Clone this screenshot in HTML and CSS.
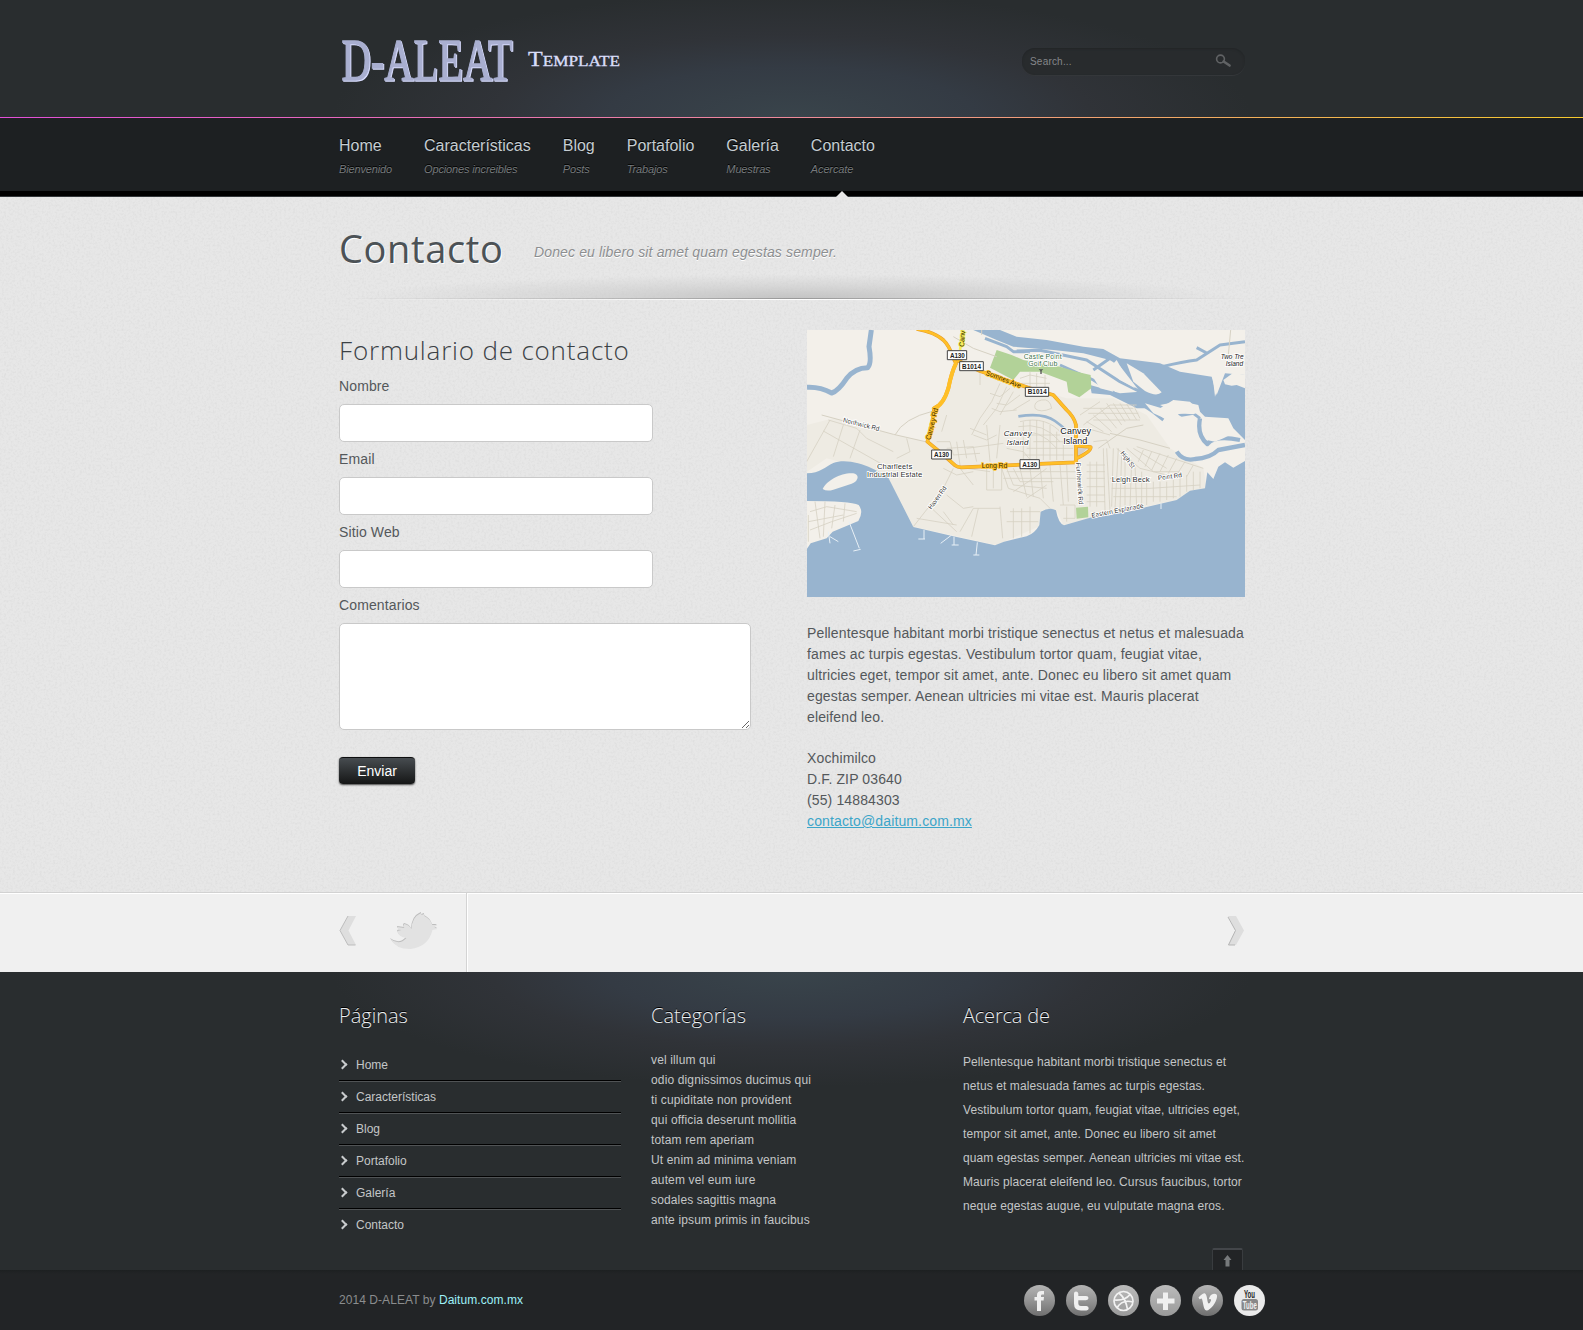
FILE: index.html
```html
<!DOCTYPE html>
<html lang="es">
<head>
<meta charset="utf-8">
<title>D-ALEAT Template - Contacto</title>
<link rel="stylesheet" href="styles.css">
</head>
<body>
<header class="header">
  <div class="wrap header-row">
    <svg class="logo" width="290" height="60" viewBox="0 0 290 60" role="img" aria-label="D-ALEAT Template">
      <text class="logo-name" x="2.500" y="49.500" textLength="171" lengthAdjust="spacingAndGlyphs">D-ALEAT</text>
      <text class="logo-sub" x="189" y="36" textLength="92" lengthAdjust="spacingAndGlyphs">Template</text>
    </svg>
    <form class="search">
      <span class="search-text">Search...</span>
      <svg width="18" height="15" viewBox="0 0 18 15"><circle cx="5.500" cy="5" r="3.900" fill="none" stroke="#606264" stroke-width="1.600"/><path d="M8.600 7.400 14.600 11.600" stroke="#606264" stroke-width="2.500" stroke-linecap="round"/></svg>
    </form>
  </div>
</header>
<div class="rainbow"></div>
<nav class="nav">
  <ul class="wrap nav-list">
    <li>Home<em>Bienvenido</em></li>
    <li>Características<em>Opciones increibles</em></li>
    <li>Blog<em>Posts</em></li>
    <li>Portafolio<em>Trabajos</em></li>
    <li>Galería<em>Muestras</em></li>
    <li class="current">Contacto<em>Acercate</em></li>
  </ul>
</nav>
<main class="main">
  <svg class="grain" width="100%" height="100%"><filter id="paper" x="0" y="0" width="100%" height="100%"><feTurbulence type="fractalNoise" baseFrequency="0.45" numOctaves="2" seed="4"/><feColorMatrix values="0 0 0 0 0.5  0 0 0 0 0.5  0 0 0 0 0.5  0.7 0 0 0 -0.3"/></filter><rect width="100%" height="100%" filter="url(#paper)"/></svg>
  <div class="wrap content">
    <div class="title">
      <h1>Contacto</h1>
      <p>Donec eu libero sit amet quam egestas semper.</p>
    </div>
    <div class="columns">
      <form class="form">
        <h2>Formulario de contacto</h2>
        <label for="n">Nombre</label><input id="n" type="text">
        <label for="e">Email</label><input id="e" type="text">
        <label for="s">Sitio Web</label><input id="s" type="text">
        <label for="c">Comentarios</label><textarea id="c"></textarea>
        <button type="button">Enviar</button>
      </form>
      <div class="info">
        <svg class="map" width="438" height="267" viewBox="21 15 1314 801" preserveAspectRatio="none">
          <rect x="21" y="15" width="1314" height="801" fill="#f3f0ea"/>
          <path fill="#eeebe3" d="M21 300 100 280 290 330 380 350 400 250 440 220 470 110 560 140 690 190 800 220 940 220 1040 270 1110 370 1210 430 1220 490 1130 525 870 580 790 600 770 555 725 555 715 605 590 660 340 605 260 450 80 400 21 440Z"/>
          <!-- southern estuary -->
          <path fill="#98b4cf" d="M21 445C60 445 75 425 100 414C130 402 180 412 215 430L262 452L340 606L460 634L585 661L612 650L680 634Q705 625 718 600L722 560Q750 545 768 556Q775 595 792 601L870 578L1030 548L1130 525L1170 497L1215 490L1222 442L1240 462L1255 425L1275 412L1300 428L1335 408V816H21V671L32 655L80 640L98 620L175 588Q192 560 176 540Q150 528 21 528Z"/>
          <path fill="#f3f0ea" d="M68 492C80 465 130 440 165 446C180 452 172 470 155 476L100 494Q80 500 68 492Z"/>
          <!-- northern creeks -->
          <g fill="none" stroke="#98b4cf" stroke-linejoin="round">
            <path stroke-width="15" d="M214 15 207 65Q216 115 203 128Q165 128 140 160Q115 198 95 204Q60 185 21 187"/>
            <path stroke-width="8" d="M655 274Q730 262 765 288T800 318"/>
            <path stroke-width="9" d="M650 78 720 76 860 105 960 170 1020 200M780 120 880 165 960 215M960 120 930 100 880 135M555 40 620 65 640 80 690 80M1085 125Q1150 110 1190 105L1260 60 1335 50M1190 68 1220 84M1020 235Q1060 260 1090 285M1135 272 1180 265 1200 280"/>
            <path stroke-width="13" d="M1200 280Q1190 330 1222 357Q1245 330 1320 345M1130 380Q1150 410 1185 402Q1230 400 1255 375L1335 360"/>
          </g>
          <path fill="#98b4cf" d="M520 15H600L650 35 740 45 850 65 910 72 960 100 1080 115 1140 140 1235 155 1250 210 1275 145 1335 150V345L1300 310 1285 280 1215 275 1170 230 1120 225 1080 250 1010 250 930 210 875 205 870 180 960 205 1020 200 950 110 850 85 760 75 640 65 590 45Z"/>
          <g fill="#f3f0ea">
            <path d="M980 115 1030 145 1085 202Q1070 216 1035 198L1000 170Z"/>
            <path d="M925 132 950 105 970 140 1005 190 960 165Z"/>
            <path d="M1270 165 1300 143 1335 150V190L1310 180 1295 182 1275 178Z"/>
            <path d="M1080 240 1140 228 1195 240 1200 260 1180 268 1130 265 1110 255Z"/>
            <path d="M1210 285 1260 282 1308 322 1270 340 1245 350 1220 345Z"/>
            <path d="M1035 235 1120 260 1160 285 1120 292 1060 265Z"/>
            <path d="M875 150 930 170 940 200 900 190Z"/>
            <path d="M1238 155 1262 165 1245 215Z"/>
          </g>
          <path fill="#b2d298" d="M590 75 635 90 670 105 780 125 830 140 872 150 874 190 838 217 805 202 800 170 720 140 660 140 640 165 570 128ZM828 548 864 545 865 577 830 581Z"/>
          <!-- residential streets -->
          <g class="streets">
            <path stroke-width="3" d="M65 270 280 328 385 352M285 330Q310 280 400 258M545 15V30M460 35 520 70 590 95M1292 15 1285 90M895 370 980 310 1030 300M930 325 1020 345 1110 370"/>
            <path d="M90 285 20 410M70 318 250 420M130 300 100 395M180 315 150 400M85 285 170 310 200 340 280 380M320 340 330 380 290 400M440 270 425 320M540 140V180M600 175 575 230 540 280 515 330M620 185 590 250 550 300M640 200 600 270M660 160 690 150 740 160M665 175 750 175M690 140V190M710 145V185M735 150V190M630 190 600 215 570 205M660 210 620 240 590 235M690 225 640 255M705 250Q700 230 725 225T755 250Q720 265 705 250M575 250 600 260 650 255"/>
            <path d="M410 350 450 350 460 390 540 385M470 350 480 420M440 370 520 365 530 410M490 345 500 400M520 330 560 345 590 330M560 300 570 410M600 300 590 400M620 370 670 380 700 415M500 370 610 355M510 310 560 330M430 430 470 450 520 440M460 430 430 490 385 550M480 430 520 480M500 430 570 440M560 430V495H605V425M580 430V490M395 550 470 620M440 510 490 550 520 545M520 550 480 620M535 550 515 635M520 550H600M600 545 608 640M430 560 460 600M350 580 470 600M340 605 430 490"/>
            <path d="M660 290Q740 270 790 330M655 305Q730 290 780 350M650 320Q720 310 770 370M670 290V410M690 285V410M710 285V410M730 290V405M750 300V405M770 320V405M790 350V405M660 330H780M700 350H820M680 370H820M670 390H820M850 300 930 240 1010 240M840 270 900 230M860 310 930 330M860 290 910 320M880 270 935 320M900 250 950 310M920 235 965 300M940 235 975 290M960 235 990 285M980 237 1010 285M1000 240 1020 280M850 250H1000M865 265H1015M880 285H1020"/>
            <path d="M605 430 625 490 720 520 750 550M620 430 640 480 740 490M640 430 660 470 760 470M660 430 680 515M690 430 700 515M720 420 730 520M750 420 760 530M780 420 790 540M800 420 805 530M610 460H830M620 440H830M640 500 700 460 740 430M680 520 740 480M630 560H720M620 590H715M640 550V640M665 550V635M690 545V625M780 540H825V580H790M800 545V590M860 420H915M860 440H915M860 460H915M860 485H915M860 510H915M860 530H915M870 410V545M890 410V545M910 370 915 555"/>
            <path d="M920 370 930 560M940 370 935 545M955 370 945 550M965 380 960 550M975 390 975 545M995 410 990 545M1005 420 1010 545M1025 440 1025 540M1040 470 1040 540M1060 470V530M1080 470V530M1100 470V525M1120 465V520M1140 460V515M1160 450V500M1180 440V495M1200 440V490M950 370 1020 430 1100 450M980 370 1060 440 1140 440M1000 370 1100 430M1030 375 1015 410M1055 380 1035 425M1080 385 1055 435M1105 390 1080 440M1130 400 1105 445M1155 410 1130 450M1180 420 1160 455M1010 365 1210 430M930 460H1020M935 490H1050L1200 480M940 515H1130M880 350 920 345 930 370"/>
            <path d="M30 560 80 545 170 560M25 590 130 570M30 615 95 590 170 565M45 530 60 640M75 530 70 635M105 540 95 610M135 535 130 590M25 570V650"/>
          </g>
          <path fill="none" stroke="#e8f0f6" stroke-width="3" d="M147 590 178 670M160 678 182 673M85 620 90 655M90 635 115 650M372 615V642M355 642H375M455 630 422 655M462 635V660M455 660H476M532 652 528 690M520 690H538M1083 535V552"/>
          <!-- main roads -->
          <g fill="none" stroke-linejoin="round">
            <path fill="#d2cfca" d="M828 362H872L830 400Z"/>
            <path stroke="#e39a2d" stroke-width="11" d="M350 12Q400 20 430 45Q448 62 458 95L468 115Q455 140 445 190Q430 240 402 250Q400 290 382 350L425 385L465 421Q472 427 485 427L825 412L830 400Q875 378 872 366L828 362V300Q822 275 800 255L760 210L690 190L540 138L470 105M828 362V412"/>
            <path stroke="#ffbf27" stroke-width="8" d="M350 12Q400 20 430 45Q448 62 458 95L468 115Q455 140 445 190Q430 240 402 250Q400 290 382 350L425 385L465 421Q472 427 485 427L825 412L830 400Q875 378 872 366L828 362V300Q822 275 800 255L760 210L690 190L540 138L470 105M828 362V412"/>
            <path stroke="#ffbf27" stroke-width="12" d="M468 115Q455 140 445 190Q430 240 402 250"/>
            <path stroke="#f6ee59" stroke-width="8" d="M490 15 480 75"/>
          </g>
          <g class="badges"><path d="M442 77h58v27h-58zM479 110h71v27h-71zM676 187h70v27h-70zM395 375h59v27h-59zM660 404h58v27h-58z"/>
            <text x="450" y="98" textLength="44">A130</text><text x="486" y="131" textLength="57">B1014</text><text x="683" y="208" textLength="57">B1014</text><text x="402" y="396" textLength="45">A130</text><text x="667" y="425" textLength="45">A130</text></g>
          <g class="labels">
            <text class="town" x="781" y="328" textLength="92">Canvey</text><text class="town" x="790" y="356" textLength="72">Island</text>
            <text class="it" x="611" y="334" textLength="84">Canvey</text><text class="it" x="620" y="361" textLength="65">Island</text>
            <text x="231" y="431" textLength="106">Charfleets</text><text x="201" y="457" textLength="166">Industrial Estate</text>
            <text x="935" y="470" textLength="114">Leigh Beck</text>
            <text class="it sm" x="1262" y="102">Two Tre</text><text class="it sm" x="1277" y="123">Island</text>
            <text class="golf" x="671" y="103" textLength="114">Castle Point</text><text class="golf" x="685" y="124" textLength="87">Golf Club</text>
            <text class="sm" transform="translate(128 291) rotate(14)" textLength="112">Northwick Rd</text>
            <text class="sm" transform="translate(394 554) rotate(-54)" textLength="80">Haven Rd</text>
            <text class="sm" transform="translate(828 413) rotate(86)" textLength="126">Furtherwick Rd</text>
            <text class="sm" transform="translate(876 578) rotate(-11)" textLength="158">Eastern Esplanade</text>
            <text class="sm" transform="translate(1075 466) rotate(-8)" textLength="72">Point Rd</text>
            <text class="sm" transform="translate(961 384) rotate(54)" textLength="58">High St</text>
          </g>
          <g class="road-labels">
            <text x="545" y="429" textLength="77">Long Rd</text>
            <text transform="translate(556 149) rotate(21)" textLength="112">Somnes Ave</text>
            <text transform="translate(391 346) rotate(-76)" textLength="98">Canvey Rd</text>
            <text class="yel" transform="translate(492 66) rotate(-86)">Canv</text>
          </g>
          <path fill="#555" d="M716 133h14l-5 4v10h-4v-10z"/>
        </svg>
        <p>Pellentesque habitant morbi tristique senectus et netus et malesuada<br>fames ac turpis egestas. Vestibulum tortor quam, feugiat vitae,<br>ultricies eget, tempor sit amet, ante. Donec eu libero sit amet quam<br>egestas semper. Aenean ultricies mi vitae est. Mauris placerat<br>eleifend leo.</p>
        <p>Xochimilco<br>D.F. ZIP 03640<br>(55) 14884303<br><a href="#">contacto@daitum.com.mx</a></p>
      </div>
    </div>
  </div>
</main>
<section class="tweets">
  <div class="wrap tweets-row">
    <div class="tweets-left">
      <svg width="18" height="32" viewBox="0 0 18 32"><path d="M9 1h8L9.500 15.500 17 30H9L1 15.500Z" fill="#dedede"/><path d="M9 1 1 15.500 9 30H16.500" fill="none" stroke="#bdbdbd"/></svg>
      <svg width="49" height="38" viewBox="0 0 49 38"><path d="M1 27Q10 34 17 26Q9 25 8 19L12 18Q8 18 8 15L15 16Q13 14 15 12Q20 13 22 17Q23 5 30 2L32 1 32 3 35 2 35 4Q41 7 43 13L48 13 45 15 48 17 43 18Q39 35 21 37Q6 37 1 27Z" fill="#bdbdbd"/><path transform="translate(.4 1)" d="M1 27Q10 34 17 26Q9 25 8 19L12 18Q8 18 8 15L15 16Q13 14 15 12Q20 13 22 17Q23 5 30 2L32 1 32 3 35 2 35 4Q41 7 43 13L48 13 45 15 48 17 43 18Q39 35 21 37Q6 37 1 27Z" fill="#e2e2e2"/></svg>
    </div>
    <svg class="next" width="18" height="32" viewBox="0 0 18 32"><path d="M1 1h8l8 14.500L9 30H1L8.500 15.500Z" fill="#dedede"/><path d="M1 2 8.500 15.500 1.500 30H8" fill="none" stroke="#b5b5b5"/></svg>
  </div>
</section>
<footer class="footer">
  <div class="wrap footer-cols">
    <section><h3>Páginas</h3>
      <ul class="pages"><li>Home</li><li>Características</li><li>Blog</li><li>Portafolio</li><li>Galería</li><li>Contacto</li></ul>
    </section>
    <section><h3>Categorías</h3>
      <ul class="cats"><li>vel illum qui</li><li>odio dignissimos ducimus qui</li><li>ti cupiditate non provident</li><li>qui officia deserunt mollitia</li><li>totam rem aperiam</li><li>Ut enim ad minima veniam</li><li>autem vel eum iure</li><li>sodales sagittis magna</li><li>ante ipsum primis in faucibus</li></ul>
    </section>
    <section><h3 class="h-about">Acerca de</h3>
      <p class="about">Pellentesque habitant morbi tristique senectus et<br>netus et malesuada fames ac turpis egestas.<br>Vestibulum tortor quam, feugiat vitae, ultricies eget,<br>tempor sit amet, ante. Donec eu libero sit amet<br>quam egestas semper. Aenean ultricies mi vitae est.<br>Mauris placerat eleifend leo. Cursus faucibus, tortor<br>neque egestas augue, eu vulputate magna eros.</p>
    </section>
  </div>
  <div class="wrap top-row"><a class="to-top"><svg width="9" height="12" viewBox="0 0 9 12"><path d="M4.500 0 8.500 5H6.500V11.500H2.500V5H.5Z" fill="#777a7c"/></svg></a></div>
</footer>
<div class="bottom">
  <div class="wrap bottom-row">
    <p>2014 D-ALEAT by <a>Daitum.com.mx</a></p>
    <div class="social">
      <svg viewBox="0 0 31 31"><circle class="disc" cx="15.500" cy="15.500" r="15.500"/><path d="M13 26V15.500H10.500V12H13V10Q13 6 17.500 6H20V9.500H18.300Q17 9.500 17 10.800V12H20L19.600 15.500H17V26Z"/></svg>
      <svg viewBox="0 0 31 31"><circle class="disc" cx="15.500" cy="15.500" r="15.500"/><path d="M8 8.500Q8 6.500 10 6.500T12.300 8.500V11H20Q22.500 11.200 22.500 13T20 15.200H12.300V18Q12.300 21 15 21H20.500Q22.700 21.300 22.700 23.300T20.500 25.500H15Q8 25.500 8 18.500Z"/></svg>
      <svg viewBox="0 0 31 31"><circle class="disc light" cx="15.500" cy="15.500" r="15.500"/><g fill="none" stroke="#f2f2f2" stroke-width="1.700"><circle cx="15.500" cy="16" r="9.500"/><path d="M11 8Q18 14 19.500 24.500M6 15Q17 16 22 9.500M9 23Q14 14 25 17"/></g></svg>
      <svg viewBox="0 0 31 31"><circle class="disc light" cx="15.500" cy="15.500" r="15.500"/><path d="M13 7.500h5v6h6.500v5H18v6.500h-5v-6.500H7v-5h6z"/></svg>
      <svg viewBox="0 0 31 31"><circle class="disc" cx="15.500" cy="15.500" r="15.500"/><path d="M6.500 12.500Q11 8 12.700 8.300C15.500 9 15 18.500 16.700 18.500Q18 18.300 19 15.500Q19.300 13.500 16.800 14.200Q18 9 22 8.700Q25.500 8.500 25 12C24.500 17 18.500 25.500 14.500 25.500C11 25.500 11 13.500 9.500 13.500L7.500 14.200Z"/></svg>
      <svg viewBox="0 0 31 31"><circle fill="#eaeaea" cx="15.500" cy="15.500" r="15.500"/><text x="10" y="12.500" fill="#222" class="yt" textLength="11" lengthAdjust="spacingAndGlyphs">You</text><rect x="7.500" y="14" width="16.500" height="11.500" rx="2.500" fill="#888"/><text x="8.800" y="23.500" class="yt" textLength="14" lengthAdjust="spacingAndGlyphs">Tube</text></svg>
    </div>
  </div>
</div>
<svg width="0" height="0" class="defs"><linearGradient id="disc" x1="0" y1="0" x2="0" y2="1"><stop offset="0" stop-color="#b4b4b4"/><stop offset=".5" stop-color="#949494"/><stop offset="1" stop-color="#6f6f6f"/></linearGradient><linearGradient id="disc-light" x1="0" y1="0" x2="0" y2="1"><stop offset="0" stop-color="#bbb"/><stop offset="1" stop-color="#9a9a9a"/></linearGradient></svg>
</body>
</html>
```
FILE: styles.css
```css
* { box-sizing: border-box; }
body { margin: 0; font: 14px/21px "Liberation Sans", Arial, sans-serif; color: #54585b; background: #e5e5e5; }
h1, h2, h3, p, ul { margin: 0; padding: 0; }
ul { list-style: none; }
svg { display: block; flex: none; }
.wrap { width: 906px; margin-left: 339px; }

.header { height: 117px; background: radial-gradient(ellipse 460px 125px at 50% 100%, #39444b 0%, #343b44 40%, #303338 65%, #292d2f 100%); }
.header-row { display: flex; justify-content: space-between; align-items: flex-start; padding-top: 30px; }
.logo-name { font: 59px "Liberation Serif", serif; fill: #a9afd0; stroke: #a9afd0; stroke-width: 1.3px; filter: drop-shadow(1px 1px 0 #d9ddff); }
.logo-sub { font: 21px "Liberation Serif", serif; font-variant-caps: small-caps; fill: #d9ddf9; stroke: #d9ddf9; stroke-width: .35px; }
.search { display: flex; justify-content: space-between; align-items: center; width: 223px; height: 27px; margin-top: 18px; padding: 0 12px 0 8px; border-radius: 13px; background: #282b2d; box-shadow: inset 0 1px 2px #222527, 0 1px 0 #34373a; }
.search-text { font-size: 10px; letter-spacing: .2px; color: #85878a; }
.rainbow { height: 1px; background: linear-gradient(90deg, #e24fd8, #f08a9a 50%, #f5c92d); }
.nav { height: 78px; background: #1d2022; border-bottom: 5px solid #000; box-shadow: 0 1px 0 #33373a; position: relative; z-index: 1; }
.nav-list { display: flex; gap: 32px; padding-top: 17px; font-size: 16px; color: #c5cdd2; text-shadow: 0 -1px 0 #000; }
.nav-list li { position: relative; height: 56px; }
.nav-list em { display: block; font-size: 11px; line-height: 14px; margin-top: 6px; letter-spacing: -.14px; color: #75797c; }
.current::after { content: ""; position: absolute; left: 50%; bottom: -6px; margin-left: -7px; border: 6px solid transparent; border-top: 0; border-bottom-color: #e6e6e6; }

.main { position: relative; height: 696px; background: #e7e7e7; }
.grain { position: absolute; inset: 0; opacity: .6; }
.content { position: relative; }
.title { display: flex; align-items: flex-start; height: 104px; padding-top: 25px; width: 912px; background: linear-gradient(90deg, transparent, #999 50%, transparent) 0 102px/100% 1px no-repeat, linear-gradient(90deg, transparent, #fff 50%, transparent) 0 103px/100% 1px no-repeat, radial-gradient(ellipse 440px 24px at 50% 100%, #c4c4c4, rgba(200,200,200,.5) 50%, transparent) 0 78px/100% 24px no-repeat; }
h1, h2, h3 { font-family: "Open Sans", sans-serif; font-weight: 300; }
h1 { font-size: 38px; line-height: 54px; font-weight: 400; color: #4c5256; text-shadow: 1px 1px 0 #fff; width: 195px; letter-spacing: .65px; }
.title p { margin-top: 21px; font-style: italic; letter-spacing: .14px; color: #8c8e90; text-shadow: 0 1px 0 #fff; }
.columns { display: flex; justify-content: space-between; padding-top: 30px; }
.form { display: flex; flex-direction: column; align-items: flex-start; width: 412px; letter-spacing: .12px; }
h2 { font-size: 26px; line-height: 40px; margin-bottom: 6px; color: #3b4145; white-space: nowrap; letter-spacing: .82px; }
input, textarea { margin: 7px 0; width: 314px; height: 38px; border: 1px solid #c9c9c9; border-radius: 5px; background: #fff; }
textarea { width: 412px; height: 107px; margin-bottom: 27px; }
button { width: 76px; height: 27px; padding: 0; border: 0; border-top: 1px solid #0d0e0f; border-radius: 4px; background: linear-gradient(#474c50, #151616); color: #fff; font: 14px "Liberation Sans", sans-serif; box-shadow: 0 1px 2px rgba(0,0,0,.7); }
.info { width: 438px; white-space: nowrap; }
.info p { margin-bottom: 20px; letter-spacing: .13px; }
.map { margin-bottom: 26px; overflow: hidden; font-family: "Liberation Sans", sans-serif; }
.streets { fill: none; stroke: #d6d1c3; stroke-width: 2.4; }
.badges path { fill: #fff; stroke: #444; stroke-width: 3; }
.badges text { font-size: 19px; font-weight: 700; fill: #222; }
.labels text { font-size: 23.5px; fill: #333; stroke: #fff; stroke-width: 5px; paint-order: stroke; }
.labels .town { font-size: 27.5px; fill: #111; }
.labels .sm { font-size: 19.5px; }
.labels .it { font-style: italic; fill: #222; }
.labels .golf { font-size: 21px; fill: #3c7148; }
.road-labels text { font-size: 21px; fill: #332500; stroke: #ffc42e; stroke-width: 5px; paint-order: stroke; }
.road-labels .yel { stroke: #f6ee59; }
.info a { color: #3ba5c9; text-decoration: underline; }

.tweets { height: 80px; border-top: 1px solid #d2d2d2; background: #f0f0f0; box-shadow: inset 0 1px 0 #fff; position: relative; }
.tweets-row { display: flex; justify-content: space-between; align-items: flex-start; }
.tweets-left { display: flex; gap: 32px; width: 128px; height: 79px; padding-top: 18px; border-right: 1px solid #d4d4d4; box-shadow: 1px 0 0 #fff; }
.tweets-left svg:first-child { margin-top: 4px; }
.next { margin-top: 22px; }

.footer { height: 298px; display: flex; flex-direction: column; justify-content: space-between; background: radial-gradient(ellipse 460px 115px at 50% 0, #39444b 0%, #343b44 40%, #303338 65%, #292d2f 100%) #292d2f; }
.footer-cols { display: grid; grid-template-columns: repeat(3, 282px); gap: 30px; font-size: 12px; color: #c4c6c7; white-space: nowrap; }
h3 { font-size: 20px; line-height: 28px; padding: 30px 0 20px; color: #eceff1; text-shadow: 0 -1px 0 #000; }
.h-about { letter-spacing: -.2px; }
.pages li { display: flex; align-items: center; height: 32px; line-height: 29px; border-bottom: 1px solid #505355; box-shadow: inset 0 -1px 0 #000; padding-bottom: 1px; }
.pages li:last-child { border-color: transparent; box-shadow: none; }
.pages li::before { content: ""; width: 5px; height: 5px; margin: 0 10px 1px 0; border: solid #c8cbcd; border-width: 2px 2px 0 0; transform: rotate(45deg); }
.cats { line-height: 20px; letter-spacing: .14px; }
.about { line-height: 24px; letter-spacing: .09px; }
.top-row { display: flex; justify-content: flex-end; padding-right: 2px; }
.to-top { display: flex; justify-content: center; padding-top: 5px; width: 31px; height: 22px; background: #222426; border: 1px solid #393c3f; border-top: 2px solid #43464a; border-bottom: 0; border-radius: 2px 2px 0 0; }
.bottom { height: 60px; background: linear-gradient(#1d2021, #222426 4px); }
.bottom-row { display: flex; justify-content: space-between; align-items: center; width: 926px; height: 60px; font-size: 12px; letter-spacing: .06px; color: #8b8d8e; }
.bottom a { color: #9ff1f8; }
.social { display: flex; gap: 11px; }
.social svg { width: 31px; height: 31px; fill: #f0f0f0; }
.disc { fill: url(#disc); }
.disc.light { fill: url(#disc-light); }
.yt { font: bold 10px "Liberation Sans", sans-serif; letter-spacing: 0; }
.defs { position: absolute; }
```
